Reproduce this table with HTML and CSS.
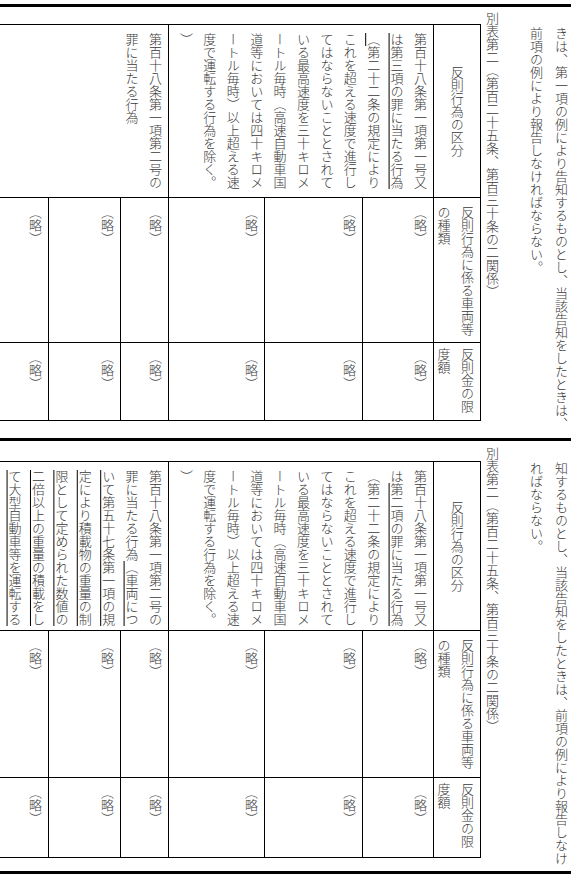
FILE: index.html
```html
<!DOCTYPE html>
<html lang="ja">
<head>
<meta charset="utf-8">
<title>別表第二</title>
<link rel="stylesheet" href="styles.css">
</head>
<body>
<div class="page">
  <section class="panel">
    <p class="body-text">きは、第一項の例により告知するものとし、当該告知をしたときは、<br>前項の例により報告しなければならない。</p>
    <h2 class="caption">別表第二（第百二十五条、第百三十条の二関係）</h2>
    <div class="table table--a">
      <div class="cell cell--center">反則行為の区分</div>
      <div class="cell span3">第百十八条第一項第一号又<br><span class="mark">は第三項の罪に当たる行為<br>（</span>第二十二条の規定により<br>これを超える速度で進行し<br>てはならないこととされて<br>いる最高速度を三十キロメ<br>ートル毎時（高速自動車国<br>道等においては四十キロメ<br>ートル毎時）以上超える速<br>度で運転する行為を除く。<br>）</div>
      <div class="cell span3">第百十八条第一項第二号の<br>罪に当たる行為</div>

      <div class="cell">反則行為に係る車両等<br>の種類</div>
      <div class="cell">（略）</div>
      <div class="cell">（略）</div>
      <div class="cell">（略）</div>
      <div class="cell">（略）</div>
      <div class="cell">（略）</div>
      <div class="cell">（略）</div>

      <div class="cell cell--tight">反則金の限<br>度額</div>
      <div class="cell">（略）</div>
      <div class="cell">（略）</div>
      <div class="cell">（略）</div>
      <div class="cell">（略）</div>
      <div class="cell">（略）</div>
      <div class="cell">（略）</div>
    </div>
  </section>

  <section class="panel panel--second">
    <p class="body-text">知するものとし、当該告知をしたときは、前項の例により報告しなけ<br>ればならない。</p>
    <h2 class="caption">別表第二（第百二十五条、第百三十条の二関係）</h2>
    <div class="table table--b">
      <div class="cell cell--center">反則行為の区分</div>
      <div class="cell span3">第百十八条第一項第一号又<br>は<span class="mark">第二項の罪に当たる行為</span><br>（第二十二条の規定により<br>これを超える速度で進行し<br>てはならないこととされて<br>いる最高速度を三十キロメ<br>ートル毎時（高速自動車国<br>道等においては四十キロメ<br>ートル毎時）以上超える速<br>度で運転する行為を除く。<br>）</div>
      <div class="cell span3">第百十八条第一項第二号の<br>罪に当たる行為<span class="mark">（車両につ<br>いて第五十七条第一項の規<br>定により積載物の重量の制<br>限として定められた数値の<br>二倍以上の重量の積載をし<br>て大型自動車等を運転する</span></div>

      <div class="cell">反則行為に係る車両等<br>の種類</div>
      <div class="cell">（略）</div>
      <div class="cell">（略）</div>
      <div class="cell">（略）</div>
      <div class="cell">（略）</div>
      <div class="cell">（略）</div>
      <div class="cell">（略）</div>

      <div class="cell cell--tight">反則金の限<br>度額</div>
      <div class="cell">（略）</div>
      <div class="cell">（略）</div>
      <div class="cell">（略）</div>
      <div class="cell">（略）</div>
      <div class="cell">（略）</div>
      <div class="cell">（略）</div>
    </div>
  </section>
</div>
</body>
</html>
```

FILE: styles.css
```css
* {
  box-sizing: border-box;
  margin: 0;
  padding: 0;
}

html,
body {
  background: #fff;
}

body {
  margin: 0;
  font-family: "Noto Sans CJK JP", "Noto Sans CJK SC", sans-serif;
  font-size: 13px;
  font-weight: 300;
  color: #3a3a3a;
}

.page {
  width: 571px;
  padding-top: 4px;
}

.panel {
  display: flex;
  flex-direction: row-reverse;
  align-items: flex-start;
  height: 434px;
  overflow: hidden;
  border-top: 3px solid #000;
}

.panel--second {
  height: 436px;
  border-bottom: 3px solid #000;
  padding-top: 1px;
}

.body-text {
  flex: none;
  writing-mode: vertical-rl;
  line-height: 25px;
  white-space: nowrap;
  margin-right: -3px;
  padding-top: 20px;
}

.caption {
  flex: none;
  writing-mode: vertical-rl;
  font-size: 13px;
  font-weight: 300;
  line-height: 22px;
  white-space: nowrap;
  margin-right: 21px;
  padding-top: 5px;
}

.table {
  flex: none;
  display: grid;
  direction: rtl;
  grid-template-columns: 46px 70px 97px 95px 47px 71px 60px;
  gap: 1px;
  background: #000;
  padding: 1px 1px 1px 0;
}

.table--a {
  grid-template-rows: 172px 144px 77px;
  margin-top: 17px;
}

.table--b {
  grid-template-rows: 168px 146px 79px;
  margin-top: 19px;
}

.cell {
  direction: ltr;
  writing-mode: vertical-rl;
  background: #fff;
  line-height: 23.4px;
  white-space: nowrap;
  padding: 8px 1px 0 0;
  overflow: hidden;
}

.span3 {
  grid-column: span 3;
}

.cell--center {
  display: flex;
  align-items: center;
  justify-content: center;
  padding: 0;
}

.cell--tight {
  padding-top: 5px;
}

.mark {
  text-decoration-line: overline;
  text-decoration-style: solid;
  text-decoration-color: #000;
  text-decoration-thickness: 1px;
}
```
